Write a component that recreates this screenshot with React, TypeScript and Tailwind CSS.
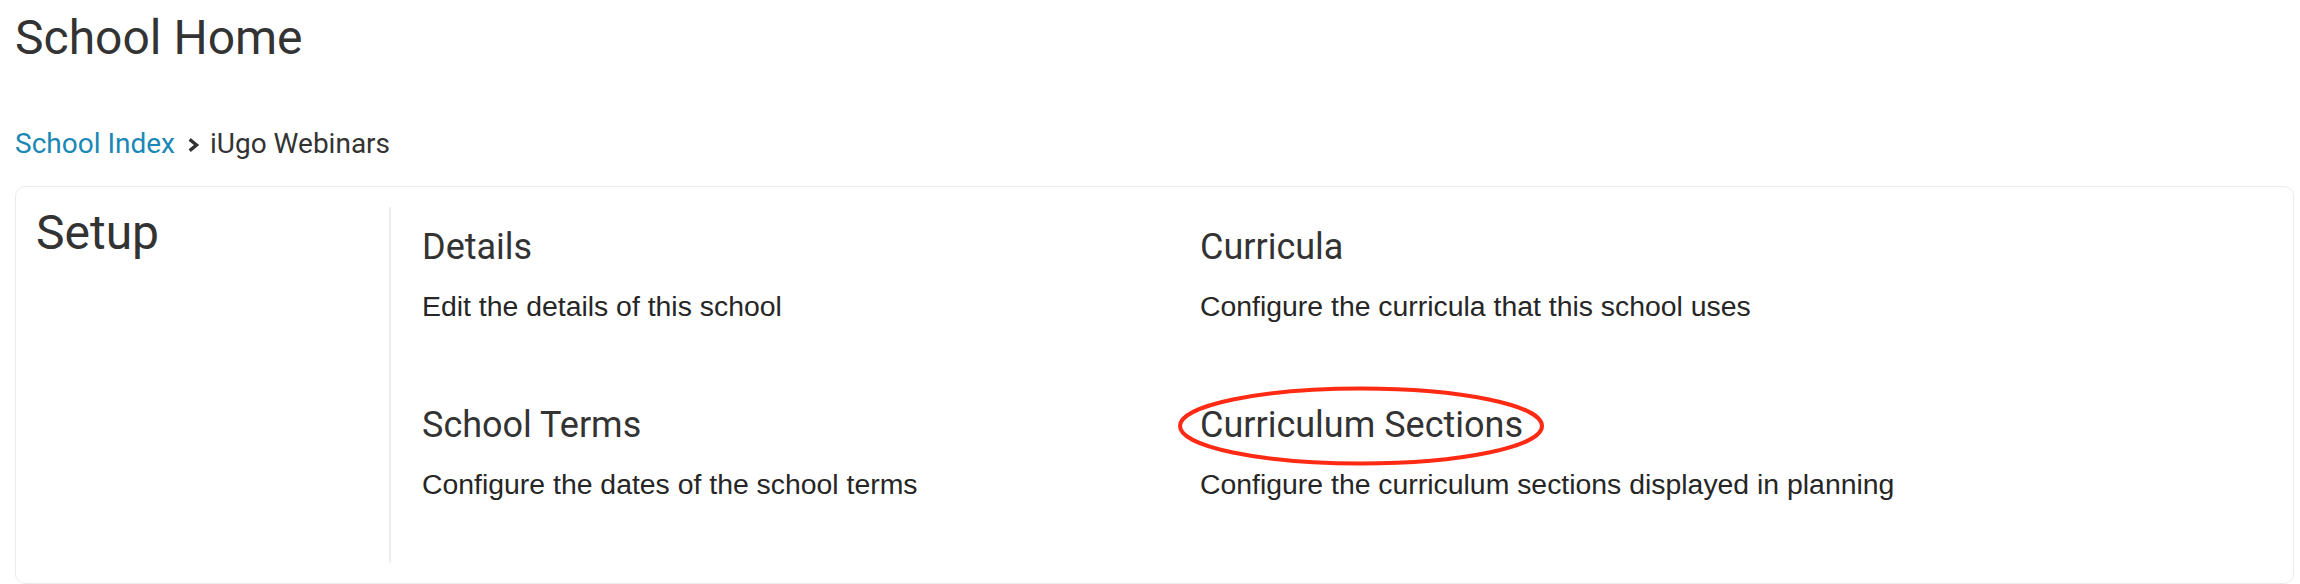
const setupItems = [
  { title: 'Details', text: 'Edit the details of this school' },
  { title: 'Curricula', text: 'Configure the curricula that this school uses' },
  { title: 'School Terms', text: 'Configure the dates of the school terms' },
  { title: 'Curriculum Sections', text: 'Configure the curriculum sections displayed in planning', circled: true },
];

const Chevron = () => (
  <svg width="12" height="14" viewBox="0 0 12 14" className="ml-[13px] mr-[10px] mt-[1px]">
    <path d="M3 2.5 L8.5 7 L3 11.5" fill="none" stroke="#333" strokeWidth="3.4" strokeLinecap="square" />
  </svg>
);

const SetupItem = ({ item }: { item: any }) => (
  <div className="relative">
    {/* red marker drawn round the item */}
    {item.circled && (
      <svg width="366" height="80" className="absolute left-[-22px] top-[-17px]">
        <ellipse cx="183" cy="40" rx="181" ry="37.5" fill="none" stroke="#ff2a14" strokeWidth="4" />
      </svg>
    )}
    <h3 className="font-['Roboto'] text-[36px] leading-[44px] text-[#333] whitespace-nowrap">{item.title}</h3>
    <p className="mt-[17px] font-['Liberation_Sans',Arial,sans-serif] text-[28.4px] leading-[40px] text-[#262626] whitespace-nowrap">
      {item.text}
    </p>
  </div>
);

const App = () => {
  return (
    <div className="min-h-[584px] bg-white pl-[15px] pr-[6px] pt-[14px] font-['Roboto',sans-serif]">
      <h1 className="text-[48px] leading-[48px] text-[#333]">School Home</h1>

      <div className="mt-[68px] flex items-center text-[28px] leading-[28px]">
        <a href="#" className="text-[#1a88b6]">School Index</a>
        <Chevron />
        <span className="text-[#333]">iUgo Webinars</span>
      </div>

      <div className="mt-[28px] flex rounded-[10px] border border-[#ebebeb] p-[20px]">
        <div className="w-[353px] shrink-0">
          <h2 className="text-[48px] leading-[52px] text-[#333]">Setup</h2>
        </div>
        <div className="flex-1 border-l-2 border-[#eeeeee] pl-[31px] pt-[18px] pb-[59px]">
          <div className="grid grid-cols-[778px_778px] gap-y-[77px]">
            {setupItems.map((item) => (
              <SetupItem key={item.title} item={item} />
            ))}
          </div>
        </div>
      </div>
    </div>
  );
};

export default App;
